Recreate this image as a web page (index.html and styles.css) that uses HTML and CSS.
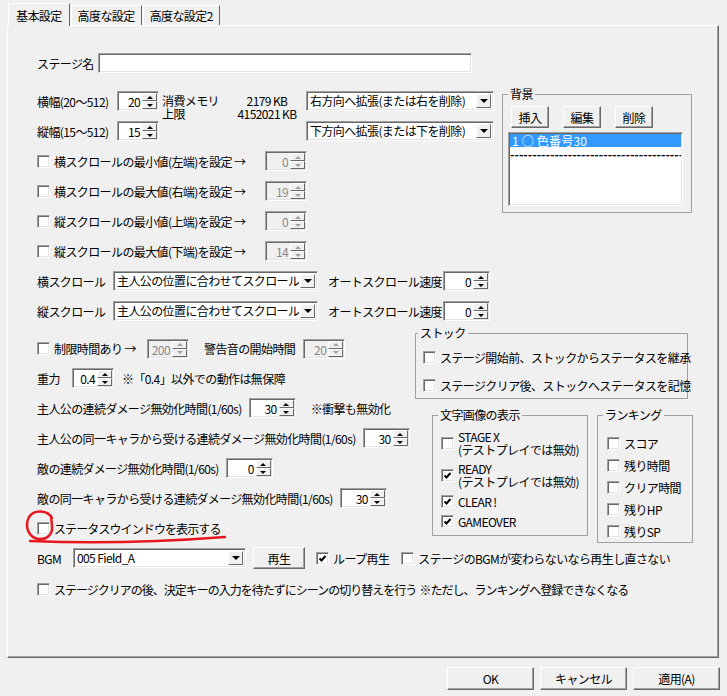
FILE: index.html
```html
<!DOCTYPE html>
<html lang="ja">
<head>
    <meta charset="UTF-8">
    <title>ステージ設定</title>
    <link rel="stylesheet" href="styles.css">
</head>
<body>
<div class="dialog">
    <div class="tabs">
        <div class="tab active">基本設定</div>
        <div class="tab">高度な設定</div>
        <div class="tab">高度な設定2</div>
    </div>

    <div class="panel">
        <div class="row">
            <span class="name-lbl">ステージ名</span>
            <span class="field name-field"></span>
        </div>

        <div class="sec-a">
            <div class="col-a">
                <div class="row">
                    <span class="size-lbl">横幅(20～512)</span>
                    <span class="spin spin-s"><span class="spin-val">20</span><span class="spin-btns"><span class="up"></span><span class="dn"></span></span></span>
                    <div class="mem">
                        <span>消費メモリ</span><span class="mem-val">2179 KB</span>
                        <span>上限</span><span class="mem-val">4152021 KB</span>
                    </div>
                    <span class="combo combo-dir"><span class="combo-text">右方向へ拡張(または右を削除)</span><span class="combo-btn"></span></span>
                </div>
                <div class="row">
                    <span class="size-lbl">縦幅(15～512)</span>
                    <span class="spin spin-s"><span class="spin-val">15</span><span class="spin-btns"><span class="up"></span><span class="dn"></span></span></span>
                    <div class="mem"></div>
                    <span class="combo combo-dir"><span class="combo-text">下方向へ拡張(または下を削除)</span><span class="combo-btn"></span></span>
                </div>
                <div class="row">
                    <label class="check lim"><span class="cb"></span>横スクロールの最小値(左端)を設定 →</label>
                    <span class="spin spin-s off"><span class="spin-val">0</span><span class="spin-btns"><span class="up"></span><span class="dn"></span></span></span>
                </div>
                <div class="row">
                    <label class="check lim"><span class="cb"></span>横スクロールの最大値(右端)を設定 →</label>
                    <span class="spin spin-s off"><span class="spin-val">19</span><span class="spin-btns"><span class="up"></span><span class="dn"></span></span></span>
                </div>
                <div class="row">
                    <label class="check lim"><span class="cb"></span>縦スクロールの最小値(上端)を設定 →</label>
                    <span class="spin spin-s off"><span class="spin-val">0</span><span class="spin-btns"><span class="up"></span><span class="dn"></span></span></span>
                </div>
                <div class="row">
                    <label class="check lim"><span class="cb"></span>縦スクロールの最大値(下端)を設定 →</label>
                    <span class="spin spin-s off"><span class="spin-val">14</span><span class="spin-btns"><span class="up"></span><span class="dn"></span></span></span>
                </div>
            </div>

            <fieldset class="group bg-group">
                <legend>背景</legend>
                <div class="bg-btns">
                    <span class="btn">挿入</span>
                    <span class="btn">編集</span>
                    <span class="btn">削除</span>
                </div>
                <div class="listbox">
                    <div class="list-sel">1 ○ 色番号30</div>
                    <div class="list-dash">----------------------------------------------------</div>
                </div>
            </fieldset>
        </div>

        <div class="row">
            <span class="scroll-lbl">横スクロール</span>
            <span class="combo combo-scroll"><span class="combo-text">主人公の位置に合わせてスクロール</span><span class="combo-btn"></span></span>
            <span class="auto-lbl">オートスクロール速度</span>
            <span class="spin spin-m"><span class="spin-val">0</span><span class="spin-btns"><span class="up"></span><span class="dn"></span></span></span>
        </div>
        <div class="row">
            <span class="scroll-lbl">縦スクロール</span>
            <span class="combo combo-scroll"><span class="combo-text">主人公の位置に合わせてスクロール</span><span class="combo-btn"></span></span>
            <span class="auto-lbl">オートスクロール速度</span>
            <span class="spin spin-m"><span class="spin-val">0</span><span class="spin-btns"><span class="up"></span><span class="dn"></span></span></span>
        </div>

        <div class="sec-b">
            <div class="col-b">
                <div class="row row-first">
                    <label class="check time-chk"><span class="cb"></span>制限時間あり →</label>
                    <span class="spin spin-s off"><span class="spin-val">200</span><span class="spin-btns"><span class="up"></span><span class="dn"></span></span></span>
                    <span class="warn-lbl">警告音の開始時間</span>
                    <span class="spin spin-s off gap8"><span class="spin-val">20</span><span class="spin-btns"><span class="up"></span><span class="dn"></span></span></span>
                </div>
                <div class="row">
                    <span class="grav-lbl">重力</span>
                    <span class="spin spin-s"><span class="spin-val">0.4</span><span class="spin-btns"><span class="up"></span><span class="dn"></span></span></span>
                    <span class="gap8">※「0.4」以外での動作は無保障</span>
                </div>
                <div class="row">
                    <span>主人公の連続ダメージ無効化時間(1/60s)</span>
                    <span class="spin spin-m gap7"><span class="spin-val">30</span><span class="spin-btns"><span class="up"></span><span class="dn"></span></span></span>
                    <span class="note">※衝撃も無効化</span>
                </div>
                <div class="row">
                    <span>主人公の同一キャラから受ける連続ダメージ無効化時間(1/60s)</span>
                    <span class="spin spin-m gap7"><span class="spin-val">30</span><span class="spin-btns"><span class="up"></span><span class="dn"></span></span></span>
                </div>
                <div class="row">
                    <span>敵の連続ダメージ無効化時間(1/60s)</span>
                    <span class="spin spin-m gap7"><span class="spin-val">0</span><span class="spin-btns"><span class="up"></span><span class="dn"></span></span></span>
                </div>
                <div class="row">
                    <span>敵の同一キャラから受ける連続ダメージ無効化時間(1/60s)</span>
                    <span class="spin spin-m gap7"><span class="spin-val">30</span><span class="spin-btns"><span class="up"></span><span class="dn"></span></span></span>
                </div>
                <div class="row">
                    <label class="check status-chk"><span class="cb"></span>ステータスウインドウを表示する</label>
                </div>
            </div>

            <div class="col-b-right">
                <fieldset class="group stock">
                    <legend>ストック</legend>
                    <div class="items">
                        <label class="check"><span class="cb"></span>ステージ開始前、ストックからステータスを継承</label>
                        <label class="check"><span class="cb"></span>ステージクリア後、ストックへステータスを記憶</label>
                    </div>
                </fieldset>
                <div class="group-row">
                    <fieldset class="group moji">
                        <legend>文字画像の表示</legend>
                        <div class="items">
                            <label class="check"><span class="cb"></span><span>STAGE X<br>(テストプレイでは無効)</span></label>
                            <label class="check"><span class="cb on"><svg width="9" height="9" viewBox="0 0 9 9"><polyline points="1.5,4.5 3.5,6.5 7.5,2" fill="none" stroke="#000" stroke-width="2"/></svg></span><span>READY<br>(テストプレイでは無効)</span></label>
                            <label class="check"><span class="cb on"><svg width="9" height="9" viewBox="0 0 9 9"><polyline points="1.5,4.5 3.5,6.5 7.5,2" fill="none" stroke="#000" stroke-width="2"/></svg></span>CLEAR !</label>
                            <label class="check"><span class="cb on"><svg width="9" height="9" viewBox="0 0 9 9"><polyline points="1.5,4.5 3.5,6.5 7.5,2" fill="none" stroke="#000" stroke-width="2"/></svg></span>GAMEOVER</label>
                        </div>
                    </fieldset>
                    <fieldset class="group rank">
                        <legend>ランキング</legend>
                        <div class="items">
                            <label class="check"><span class="cb"></span>スコア</label>
                            <label class="check"><span class="cb"></span>残り時間</label>
                            <label class="check"><span class="cb"></span>クリア時間</label>
                            <label class="check"><span class="cb"></span>残りHP</label>
                            <label class="check"><span class="cb"></span>残りSP</label>
                        </div>
                    </fieldset>
                </div>
            </div>
        </div>

        <div class="row">
            <span class="bgm-lbl">BGM</span>
            <span class="combo combo-bgm"><span class="combo-text">005 Field_A</span><span class="combo-btn"></span></span>
            <span class="btn play">再生</span>
            <label class="check loop"><span class="cb on"><svg width="9" height="9" viewBox="0 0 9 9"><polyline points="1.5,4.5 3.5,6.5 7.5,2" fill="none" stroke="#000" stroke-width="2"/></svg></span>ループ再生</label>
            <label class="check keep"><span class="cb"></span>ステージのBGMが変わらないなら再生し直さない</label>
        </div>
        <div class="row last-row">
            <label class="check"><span class="cb"></span>ステージクリアの後、決定キーの入力を待たずにシーンの切り替えを行う&nbsp; ※ただし、ランキングへ登録できなくなる</label>
        </div>
    </div>

    <div class="footer">
        <span class="btn">OK</span>
        <span class="btn">キャンセル</span>
        <span class="btn">適用(A)</span>
    </div>

    <!-- red pen marks drawn over the dialog -->
    <svg class="mark" width="727" height="696" viewBox="0 0 727 696">
        <path d="M52 518 C48 510, 34 509, 29 517 C24 527, 29 538, 39 539 C47 540, 53 534, 52 526 L51 516" fill="none" stroke="#e8161e" stroke-width="2.5" stroke-linecap="round"/>
        <path d="M30 541 Q120 545 225 537" fill="none" stroke="#e8161e" stroke-width="2.5" stroke-linecap="round"/>
    </svg>
</div>
</body>
</html>
```

FILE: styles.css
```css
body {
    margin: 0;
    background: #f0f0f0;
    font-family: "Noto Sans CJK JP", "Noto Sans", sans-serif;
    font-size: 12px;
    letter-spacing: -0.6px;
    color: #000;
}
.dialog {
    position: relative;
    width: 727px;
    height: 696px;
    line-height: 13px;
}

/* tabs */
.tabs {
    display: flex;
    align-items: flex-end;
    height: 25px;
    padding-left: 8px;
}
.tab {
    height: 20px;
    padding: 0 6px;
    display: flex;
    align-items: center;
    box-sizing: border-box;
    border: 1px solid;
    border-bottom: 0;
    border-color: #fff #696969 #fff #fff;
    margin-right: 1px;
}
.tab.active {
    height: 23px;
    margin-bottom: -1px;
    padding: 0 7px;
    position: relative;
    z-index: 1;
    background: #f0f0f0;
}
.panel {
    margin-left: 7px;
    width: 712px;
    height: 633px;
    box-sizing: border-box;
    border: 1px solid;
    border-color: #fff #696969 #696969 #fff;
    box-shadow: inset -1px -1px 0 #a0a0a0;
    padding: 22px 0 0 29px;
}

.row {
    display: flex;
    align-items: center;
    height: 30px;
    white-space: nowrap;
}

/* sunken controls */
.field, .spin, .combo, .listbox {
    box-sizing: border-box;
    border: 1px solid;
    border-color: #a0a0a0 #fff #fff #a0a0a0;
    box-shadow: inset 1px 1px 0 #696969, inset -1px -1px 0 #e3e3e3;
    background: #fff;
}
.name-lbl { width: 61px; }
.name-field { width: 374px; height: 20px; }

.spin {
    display: flex;
    height: 20px;
    padding: 1px;
    flex: none;
}
.spin-s { width: 42px; }
.spin-m { width: 47px; }
.spin-val {
    flex: 1;
    text-align: right;
    padding-right: 2px;
    line-height: 17px;
}
.spin-btns {
    width: 15px;
    display: flex;
    flex-direction: column;
}
.spin-btns span {
    flex: 1;
    display: flex;
    align-items: center;
    justify-content: center;
    box-sizing: border-box;
    background: #f0f0f0;
    border: 1px solid;
    border-color: #fff #696969 #696969 #fff;
}
.spin-btns .up::after {
    content: "";
    border: 3px solid transparent;
    border-top: 0;
    border-bottom: 3px solid #000;
}
.spin-btns .dn::after {
    content: "";
    border: 3px solid transparent;
    border-bottom: 0;
    border-top: 3px solid #000;
}
.spin.off {
    background: #f0f0f0;
    color: #8a8a8a;
}
.spin.off .up::after { border-bottom-color: #a0a0a0; }
.spin.off .dn::after { border-top-color: #a0a0a0; }

.combo {
    display: flex;
    align-items: center;
    height: 20px;
    padding: 1px;
    flex: none;
}
.combo-text {
    flex: 1;
    padding-left: 2px;
    line-height: 16px;
    overflow: hidden;
}
.combo-btn {
    width: 15px;
    align-self: stretch;
    display: flex;
    align-items: center;
    justify-content: center;
    box-sizing: border-box;
    background: #f0f0f0;
    border: 1px solid;
    border-color: #fff #696969 #696969 #fff;
    margin: 1px;
}
.combo-btn::after {
    content: "";
    border: 4px solid transparent;
    border-bottom: 0;
    border-top: 4px solid #000;
}
.combo-dir { width: 188px; }
.combo-scroll { width: 205px; }
.combo-bgm { width: 173px; }

/* checkboxes */
.check {
    display: flex;
    align-items: center;
    gap: 4px;
}
.cb {
    width: 13px;
    height: 13px;
    flex: none;
    box-sizing: border-box;
    background: #fff;
    border: 1px solid;
    border-color: #a0a0a0 #fff #fff #a0a0a0;
    box-shadow: inset 1px 1px 0 #696969, inset -1px -1px 0 #e3e3e3;
    display: flex;
    align-items: center;
    justify-content: center;
}
.lim { width: 228px; }

/* buttons */
.btn {
    display: inline-flex;
    align-items: center;
    justify-content: center;
    height: 22px;
    box-sizing: border-box;
    background: #f0f0f0;
    border: 1px solid;
    border-color: #fff #696969 #696969 #fff;
    box-shadow: inset -1px -1px 0 #a0a0a0;
}

/* section with size settings */
.sec-a {
    display: flex;
    margin-top: 8px;
}
.col-a { width: 465px; }
.size-lbl { width: 80px; }
.mem {
    align-self: flex-start;
    margin: 8px 0 0 3px;
    width: 144px;
    display: grid;
    grid-template-columns: 66px 78px;
}
.mem-val { text-align: center; }

/* group boxes */
.group {
    margin: 0;
    padding: 0;
    border: 1px solid #a0a0a0;
    box-sizing: border-box;
    min-width: 0;
}
.group legend {
    padding: 0 2px;
    line-height: 14px;
}
.bg-group {
    width: 190px;
    height: 126px;
    margin-top: 1px;
}
.bg-group legend { margin-left: 5px; }
.bg-btns {
    display: flex;
    gap: 14px;
    padding: 5px 0 0 8px;
}
.bg-btns .btn { width: 38px; }
.listbox {
    width: 175px;
    height: 74px;
    margin: 4px 0 0 5px;
    padding: 1px;
}
.list-sel {
    background: #3399ff;
    color: #fff;
    height: 13px;
    padding-left: 2px;
    letter-spacing: 0.2px;
    white-space: pre;
}
.list-dash {
    overflow: hidden;
    white-space: nowrap;
    letter-spacing: 0;
    font-weight: bold;
}

.scroll-lbl { width: 76px; }
.auto-lbl {
    margin-left: 10px;
    width: 115px;
}

/* lower section */
.sec-b { display: flex; }
.col-b {
    width: 378px;
    padding-top: 8px;
}
.row-first { height: 29px; }
.time-chk { width: 110px; }
.warn-lbl { margin-left: 15px; }
.gap8 { margin-left: 8px; }
.gap7 { margin-left: 7px; }
.grav-lbl { width: 35px; }
.note { margin-left: 15px; }
.status-chk { letter-spacing: -0.9px; }

.items {
    display: flex;
    flex-direction: column;
    white-space: nowrap;
}
.items .check { min-height: 14px; }
.stock {
    width: 273px;
    height: 73px;
}
.stock legend { margin-left: 2px; }
.stock .items {
    padding: 10px 0 0 7px;
    gap: 14px;
}
.group-row {
    display: flex;
    margin-top: 9px;
}
.moji {
    width: 156px;
    height: 128px;
    margin-left: 17px;
}
.moji legend { margin-left: 5px; }
.moji .items {
    padding: 8px 0 0 8px;
    gap: 6px;
}
.rank {
    width: 96px;
    height: 135px;
    margin-left: 9px;
}
.rank legend { margin-left: 5px; }
.rank .items {
    padding: 14px 0 0 9px;
    gap: 8px;
}

.bgm-lbl { width: 36px; }
.play {
    width: 52px;
    margin-left: 7px;
}
.loop { margin-left: 11px; }
.keep { margin-left: 12px; }
.last-row {
    margin-top: 1px;
    letter-spacing: -1px;
}

.footer {
    display: flex;
    justify-content: flex-end;
    gap: 6px;
    padding: 9px 7px 0 0;
}
.footer .btn {
    width: 87px;
    height: 23px;
}

.mark {
    position: absolute;
    left: 0;
    top: 0;
    pointer-events: none;
}
```
